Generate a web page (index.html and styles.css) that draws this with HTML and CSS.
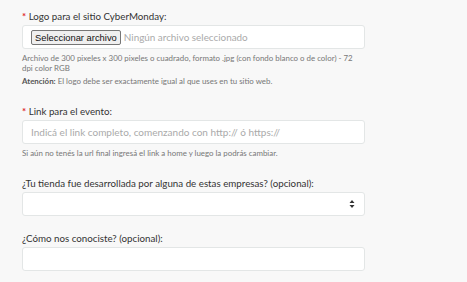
FILE: index.html
```html
<!DOCTYPE html>
<html lang="es">
<head>
<meta charset="utf-8">
<link rel="stylesheet" href="styles.css">
</head>
<body>
<form class="form">
  <div class="field">
    <label class="label"><span class="req">*</span> Logo para el sitio CyberMonday:</label>
    <div class="input file">
      <span class="file-btn">Seleccionar archivo</span>
      <span class="file-name">Ningún archivo seleccionado</span>
    </div>
    <p class="help">Archivo de 300 pixeles x 300 pixeles o cuadrado, formato .jpg (con fondo blanco o de color) - 72 dpi color RGB</p>
    <p class="help note"><b>Atención:</b> El logo debe ser exactamente igual al que uses en tu sitio web.</p>
  </div>
  <div class="field">
    <label class="label"><span class="req">*</span> Link para el evento:</label>
    <div class="input"><span class="placeholder">Indicá el link completo, comenzando con http:// ó https://</span></div>
    <p class="help">Si aún no tenés la url final ingresá el link a home y luego la podrás cambiar.</p>
  </div>
  <div class="field">
    <label class="label">¿Tu tienda fue desarrollada por alguna de estas empresas? (opcional):</label>
    <div class="input select">
      <svg class="arrows" width="6" height="10" viewBox="0 0 6 10"><path d="M0.5 4 L3 1 L5.5 4 Z M0.5 6 L3 9 L5.5 6 Z" fill="#333"/></svg>
    </div>
  </div>
  <div class="field short">
    <label class="label">¿Cómo nos conociste? (opcional):</label>
    <div class="input"></div>
  </div>
</form>
</body>
</html>
```
FILE: styles.css
```css
html, body {
  margin: 0;
  padding: 0;
  background: #f8f8f8;
}
body {
  font-family: Lato, "Liberation Sans", sans-serif;
  color: #333;
}
.form {
  width: 343px;
  padding: 10px 0 0 22px;
  display: flex;
  flex-direction: column;
}
.field {
  display: flex;
  flex-direction: column;
}
.label {
  font-size: 9.75px;
  line-height: 13px;
  color: #333;
  margin-bottom: 2px;
}
.req {
  color: #e0242c;
  font-weight: bold;
}
.input {
  box-sizing: border-box;
  height: 24px;
  background: #fff;
  border: 1px solid #e3e6e6;
  border-radius: 3px;
  display: flex;
  align-items: center;
  padding: 0 8px;
}
.file-btn {
  font-family: "Liberation Sans", Arial, sans-serif;
  font-size: 9.4px;
  color: #111;
  background: #efefef;
  border: 1px solid #767676;
  border-radius: 2px;
  padding: 1px 3px;
  line-height: 11px;
}
.file-name {
  font-size: 9.9px;
  color: #aaa;
  margin-left: 3px;
}
.placeholder {
  font-size: 10px;
  color: #aaa;
}
.select {
  justify-content: flex-end;
  padding-right: 9px;
}
.help {
  margin: 4px 0 0;
  font-size: 7.9px;
  line-height: 10px;
  color: #777;
}
.note {
  margin-top: 3px;
}
.note b {
  font-weight: 700;
  color: #555;
}
.field + .field {
  margin-top: 19px;
}
.field + .field.short {
  margin-top: 16px;
}
```
